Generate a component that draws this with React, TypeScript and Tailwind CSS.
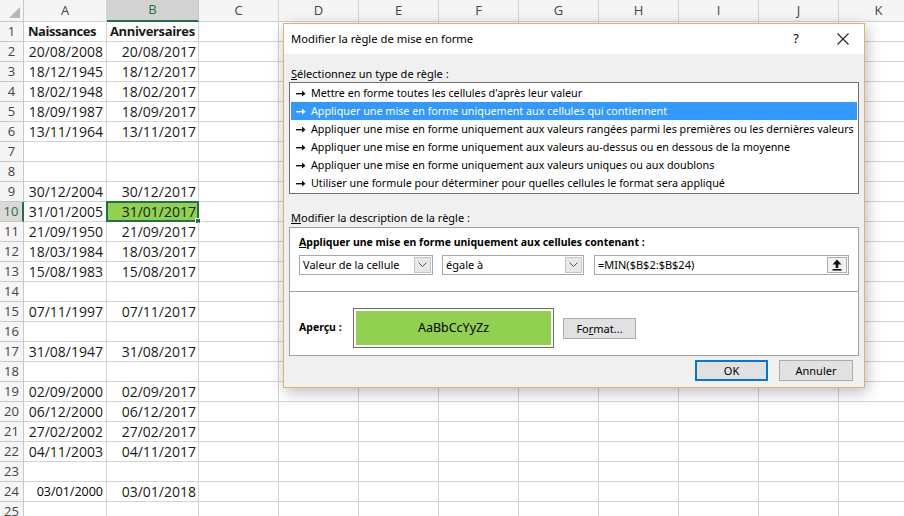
import React from 'react';

const cols = ['A', 'B', 'C', 'D', 'E', 'F', 'G', 'H', 'I', 'J', 'K'];
const colWidths = ['w-[83px]', 'w-[92px]', 'w-[80px]', 'w-[80px]', 'w-[80px]', 'w-[80px]', 'w-[80px]', 'w-[80px]', 'w-[80px]', 'w-[80px]', 'w-[80px]'];

// [naissance, anniversaire]
const rows: [string, string][] = [
    ['Naissances', 'Anniversaires'],
    ['20/08/2008', '20/08/2017'],
    ['18/12/1945', '18/12/2017'],
    ['18/02/1948', '18/02/2017'],
    ['18/09/1987', '18/09/2017'],
    ['13/11/1964', '13/11/2017'],
    ['', ''],
    ['', ''],
    ['30/12/2004', '30/12/2017'],
    ['31/01/2005', '31/01/2017'],
    ['21/09/1950', '21/09/2017'],
    ['18/03/1984', '18/03/2017'],
    ['15/08/1983', '15/08/2017'],
    ['', ''],
    ['07/11/1997', '07/11/2017'],
    ['', ''],
    ['31/08/1947', '31/08/2017'],
    ['', ''],
    ['02/09/2000', '02/09/2017'],
    ['06/12/2000', '06/12/2017'],
    ['27/02/2002', '27/02/2017'],
    ['04/11/2003', '04/11/2017'],
    ['', ''],
    ['03/01/2000', '03/01/2018'],
    ['', ''],
];

const ruleTypes = [
    "Mettre en forme toutes les cellules d'après leur valeur",
    'Appliquer une mise en forme uniquement aux cellules qui contiennent',
    'Appliquer une mise en forme uniquement aux valeurs rangées parmi les premières ou les dernières valeurs',
    'Appliquer une mise en forme uniquement aux valeurs au-dessus ou en dessous de la moyenne',
    'Appliquer une mise en forme uniquement aux valeurs uniques ou aux doublons',
    'Utiliser une formule pour déterminer pour quelles cellules le format sera appliqué',
];

const Arrow = ({ color }: { color: string }) => (
    <svg width="10" height="7" viewBox="0 0 10 7" className="shrink-0">
        <rect x="0" y="3" width="7" height="1.4" fill={color} />
        <polygon points="6,0.5 9.5,3.7 6,6.5" fill={color} />
    </svg>
);

const Chevron = () => (
    <svg width="9" height="6" viewBox="0 0 9 6">
        <polyline points="0.5,0.5 4.5,4.5 8.5,0.5" fill="none" stroke="#555" strokeWidth="1" />
    </svg>
);

const Sheet = () => (
    <div className="font-['Open_Sans',sans-serif] text-[#1a1a1a]">
        {/* column headers */}
        <div className="flex h-[22px] bg-[#f5f5f5] text-[13px] text-[#444]">
            <div className="relative w-[24px] shrink-0 border-r border-b border-[#c8c8c8]">
                <svg className="absolute right-[3px] bottom-[3px]" width="11" height="11" viewBox="0 0 11 11">
                    <polygon points="11,0 11,11 0,11" fill="#b8b8b8" />
                </svg>
            </div>
            {cols.map((c, i) => (
                <div
                    key={c}
                    className={
                        i === 1
                            ? `${colWidths[i]} shrink-0 flex items-center justify-center border-r border-[#c8c8c8] border-b-2 border-b-[#217346] bg-[#d2d2d2] text-[#217346]`
                            : `${colWidths[i]} shrink-0 flex items-center justify-center border-r border-b border-[#d4d4d4]`
                    }
                >
                    {c}
                </div>
            ))}
        </div>

        {rows.map(([a, b], r) => {
            const n = r + 1;
            const selected = n === 10;
            return (
                <div key={n} className="flex h-[20px] text-[14px] leading-[19px]">
                    <div
                        className={
                            selected
                                ? 'w-[24px] shrink-0 text-center text-[13px] bg-[#d9d9d9] text-[#217346] border-r-2 border-r-[#217346] border-b border-b-[#c8c8c8]'
                                : 'w-[24px] shrink-0 text-center text-[13px] bg-[#f5f5f5] text-[#444] border-r border-b border-[#c8c8c8]'
                        }
                    >
                        {n}
                    </div>
                    <div
                        className={
                            n === 1
                                ? 'w-[83px] shrink-0 border-r border-b border-[#d4d4d4] pl-[4px] font-bold text-[13px] tracking-[-0.45px]'
                                : n === 24
                                ? 'w-[83px] shrink-0 border-r border-b border-[#d4d4d4] pr-[3px] text-right font-medium text-[12.5px] text-black'
                                : 'w-[83px] shrink-0 border-r border-b border-[#d4d4d4] pr-[3px] text-right'
                        }
                    >
                        {a}
                    </div>
                    <div
                        className={
                            n === 1
                                ? 'w-[92px] shrink-0 border-r border-b border-[#d4d4d4] pl-[3px] font-bold text-[13px] tracking-[-0.35px]'
                                : 'relative w-[92px] shrink-0 border-r border-b border-[#d4d4d4] pr-[2px] text-right'
                        }
                    >
                        {selected && (
                            <div className="absolute -left-[1px] -top-[1px] -right-[1px] -bottom-[1px] border-2 border-[#217346] bg-[#92d050]">
                                <div className="absolute -right-[4px] -bottom-[4px] w-[6px] h-[6px] bg-[#217346] border border-white" />
                            </div>
                        )}
                        <span className="relative">{b}</span>
                    </div>
                    {cols.slice(2).map((c) => (
                        <div key={c} className="w-[80px] shrink-0 border-r border-b border-[#d4d4d4]" />
                    ))}
                </div>
            );
        })}
    </div>
);

const Dialog = () => (
    <div className="absolute left-[283px] top-[23px] w-[582px] h-[365px] border border-[#dfb46a] bg-[#f0f0f0] shadow-[2px_4px_14px_rgba(0,0,0,0.28)] font-['Noto_Sans',sans-serif] text-[11px] text-black">
        {/* title bar */}
        <div className="flex h-[30px] items-center bg-white pl-[7px]">
            <span className="text-[11.25px]">Modifier la règle de mise en forme</span>
            <span className="ml-auto mr-[38px] text-[13px]">?</span>
            <svg className="mr-[15px]" width="12" height="12" viewBox="0 0 12 12">
                <path d="M0.5 0.5 L11.5 11.5 M11.5 0.5 L0.5 11.5" stroke="#222" strokeWidth="1.1" />
            </svg>
        </div>

        <div className="px-[5px]">
            <div className="mt-[11px] h-[17px] leading-[17px] pl-[2px]">
                <span className="underline">S</span>électionnez un type de règle :
            </div>

            {/* list of rule types */}
            <div className="h-[112px] border border-[#6f6f6f] bg-white p-[1px] text-[10.75px]">
                {ruleTypes.map((t, i) => (
                    <div
                        key={i}
                        className={
                            i === 1
                                ? 'flex h-[18px] items-center gap-[5px] pl-[5px] bg-[#3399ff] text-white whitespace-nowrap'
                                : 'flex h-[18px] items-center gap-[5px] pl-[5px] whitespace-nowrap'
                        }
                    >
                        <Arrow color={i === 1 ? '#ffffff' : '#111111'} />
                        <span>{t}</span>
                    </div>
                ))}
            </div>

            <div className="mt-[15px] h-[17px] leading-[17px] pl-[2px]">
                <span className="underline">M</span>odifier la description de la règle :
            </div>

            {/* description box */}
            <div className="mt-[1px] h-[129px] border border-[#a0a0a0] bg-white">
                <div className="px-[9px] pt-[6px]">
                    <div className="h-[17px] leading-[17px] font-bold text-[10.5px]">
                        <span className="underline">A</span>ppliquer une mise en forme uniquement aux cellules contenant :
                    </div>
                    <div className="mt-[4px] flex h-[20px] items-stretch">
                        <div className="flex w-[134px] border border-[#a9a9a9]">
                            <span className="flex-1 pl-[3px] leading-[18px]">Valeur de la cellule</span>
                            <div className="m-[1px] flex w-[17px] items-center justify-center border border-[#c4c4c4] bg-[#e8e8e8]">
                                <Chevron />
                            </div>
                        </div>
                        <div className="ml-[9px] flex w-[142px] border border-[#a9a9a9]">
                            <span className="flex-1 pl-[3px] leading-[18px]">égale à</span>
                            <div className="m-[1px] flex w-[17px] items-center justify-center border border-[#c4c4c4] bg-[#e8e8e8]">
                                <Chevron />
                            </div>
                        </div>
                        <div className="ml-[10px] flex w-[255px] border border-[#a9a9a9]">
                            <span className="flex-1 pl-[3px] leading-[18px]">=MIN($B$2:$B$24)</span>
                            <div className="m-[1px] flex w-[20px] items-center justify-center border border-[#adadad] bg-[#f4f4f4]">
                                <svg width="10" height="12" viewBox="0 0 10 12">
                                    <polygon points="5,0.5 9.5,5.5 0.5,5.5" fill="#111" />
                                    <rect x="3.7" y="5" width="2.6" height="4" fill="#111" />
                                    <rect x="0.5" y="10" width="9" height="1.6" fill="#111" />
                                </svg>
                            </div>
                        </div>
                    </div>
                </div>

                <div className="mt-[16px] border-t border-[#a0a0a0]" />

                <div className="flex items-center pl-[9px] pt-[16px]">
                    <span className="w-[54px] font-bold text-[10.5px]">Aperçu :</span>
                    <div className="h-[40px] w-[201px] border border-[#6e6e6e] bg-white p-[2px]">
                        <div className="flex h-full items-center justify-center bg-[#92d050] text-[12.5px]">
                            AaBbCcYyZz
                        </div>
                    </div>
                    <button className="ml-[9px] h-[21px] w-[73px] border border-[#adadad] bg-[#e1e1e1] leading-[19px]">
                        Fo<span className="underline">r</span>mat...
                    </button>
                </div>
            </div>

            {/* OK / Annuler */}
            <div className="mt-[4px] flex justify-end pr-[6px]">
                <button className="h-[21px] w-[73px] border-2 border-[#0078d7] bg-[#e1e1e1] leading-[17px]">OK</button>
                <button className="ml-[11px] h-[21px] w-[74px] border border-[#adadad] bg-[#e1e1e1] leading-[19px]">Annuler</button>
            </div>
        </div>
    </div>
);

const App: React.FC = () => {
    return (
        <div className="relative h-[516px] w-[904px] overflow-hidden bg-white">
            <Sheet />
            <Dialog />
        </div>
    );
};

export default App;
